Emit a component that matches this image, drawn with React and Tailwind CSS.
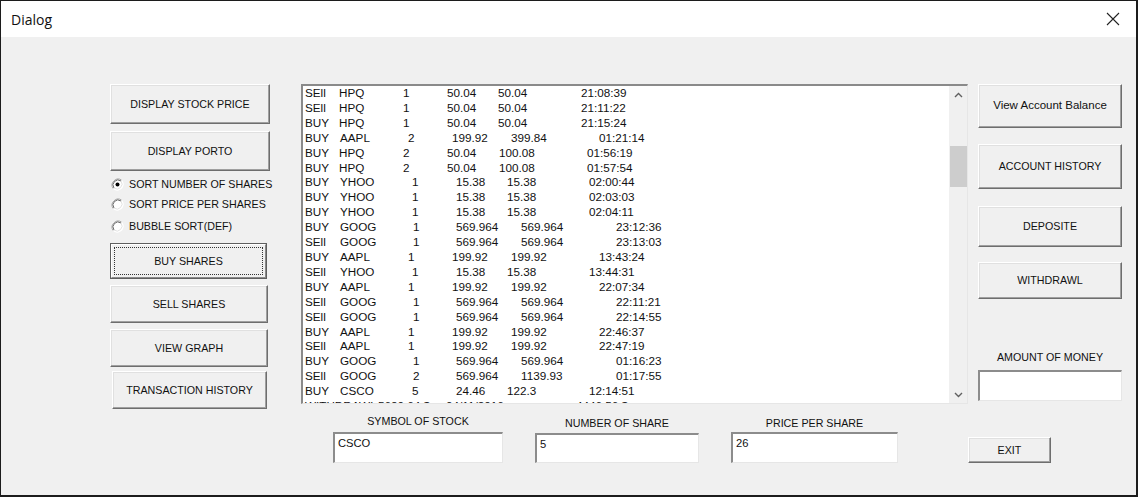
import React from "react";

const P = {
  A: [306, 340, 404, 448, 499, 582],
  B: [306, 341, 409, 453, 512, 600],
  C: [306, 340, 404, 448, 500, 588],
  D: [306, 341, 413, 457, 508, 590],
  E: [306, 341, 414, 457, 522, 617],
  W: [306, 379, 447, 577],
};

const ROWS = [
  ["A", "SEll", "HPQ", "1", "50.04", "50.04", "21:08:39"],
  ["A", "SEll", "HPQ", "1", "50.04", "50.04", "21:11:22"],
  ["A", "BUY", "HPQ", "1", "50.04", "50.04", "21:15:24"],
  ["B", "BUY", "AAPL", "2", "199.92", "399.84", "01:21:14"],
  ["C", "BUY", "HPQ", "2", "50.04", "100.08", "01:56:19"],
  ["C", "BUY", "HPQ", "2", "50.04", "100.08", "01:57:54"],
  ["D", "BUY", "YHOO", "1", "15.38", "15.38", "02:00:44"],
  ["D", "BUY", "YHOO", "1", "15.38", "15.38", "02:03:03"],
  ["D", "BUY", "YHOO", "1", "15.38", "15.38", "02:04:11"],
  ["E", "BUY", "GOOG", "1", "569.964", "569.964", "23:12:36"],
  ["E", "SEll", "GOOG", "1", "569.964", "569.964", "23:13:03"],
  ["B", "BUY", "AAPL", "1", "199.92", "199.92", "13:43:24"],
  ["D", "SEll", "YHOO", "1", "15.38", "15.38", "13:44:31"],
  ["B", "BUY", "AAPL", "1", "199.92", "199.92", "22:07:34"],
  ["E", "SEll", "GOOG", "1", "569.964", "569.964", "22:11:21"],
  ["E", "SEll", "GOOG", "1", "569.964", "569.964", "22:14:55"],
  ["B", "BUY", "AAPL", "1", "199.92", "199.92", "22:46:37"],
  ["B", "SEll", "AAPL", "1", "199.92", "199.92", "22:47:19"],
  ["E", "BUY", "GOOG", "1", "569.964", "569.964", "01:16:23"],
  ["E", "SEll", "GOOG", "2", "569.964", "1139.93", "01:17:55"],
  ["D", "BUY", "CSCO", "5", "24.46", "122.3", "12:14:51"],
  ["W", "WITHDRAWL", "5620.64 $", "04/11/2016", "4446.56 $"],
];

function Btn({ className = "", children, focus = false }) {
  if (focus) {
    return (
      <div className={"border border-[#5e5e5e] bg-[#f0f0f0] " + className}>
        <div className="h-full w-full border border-t-[#ffffff] border-l-[#ffffff] border-r-[#8a8a8a] border-b-[#8a8a8a] p-[2px]">
          <div className="flex h-full w-full items-center justify-center border border-dotted border-[#333]">
            {children}
          </div>
        </div>
      </div>
    );
  }
  return (
    <div
      className={
        "flex items-center justify-center whitespace-nowrap bg-[#f0f0f0] border border-t-[#ffffff] border-l-[#ffffff] border-r-[#6e6e6e] border-b-[#6e6e6e] shadow-[inset_-1px_-1px_0_#a0a0a0,inset_1px_1px_0_#e0e0e0] " +
        className
      }
    >
      {children}
    </div>
  );
}

function Radio({ checked, label }) {
  return (
    <div className="flex h-[20px] items-center whitespace-nowrap">
      <svg width="13" height="13" viewBox="0 0 13 13" className="ml-[1px] shrink-0">
        <circle cx="6.5" cy="6.5" r="6" fill="#ffffff" />
        <path d="M2.3 10.7 A6 6 0 0 1 10.7 2.3" fill="none" stroke="#a0a0a0" strokeWidth="1" />
        <path d="M3 10 A5 5 0 0 1 10 3" fill="none" stroke="#696969" strokeWidth="1" />
        <path d="M10.7 2.3 A6 6 0 0 1 2.3 10.7" fill="none" stroke="#ffffff" strokeWidth="1" />
        <path d="M10 3 A5 5 0 0 1 3 10" fill="none" stroke="#e3e3e3" strokeWidth="1" />
        {checked && <circle cx="6.5" cy="6.5" r="2" fill="#000" />}
      </svg>
      <span className="ml-[5px] text-[10.7px] leading-none text-[#111]">{label}</span>
    </div>
  );
}

function Field({ className = "", value = "" }) {
  return (
    <div
      className={
        "bg-white border-t-2 border-l-2 border-r border-b border-t-[#8c8c8c] border-l-[#8c8c8c] border-r-[#e6e6e6] border-b-[#e6e6e6] pl-[3px] pt-[3px] text-[11.2px] leading-[13px] text-[#111] " +
        className
      }
    >
      {value}
    </div>
  );
}

export default function App() {
  return (
    <div className="w-[1138px] h-[497px] overflow-hidden border-t border-l border-r-2 border-b-2 border-[#1c1c1c] bg-[#f0f0f0] font-['Liberation_Sans',Arial,sans-serif] text-[#111]">
      <div className="flex h-[36px] items-center justify-between bg-white pl-[10px] pr-[16px]">
        <span className="font-['Open_Sans',sans-serif] text-[14px] text-[#111]">Dialog</span>
        <svg width="14" height="14" viewBox="0 0 14 14">
          <path d="M1 1 L13 13 M13 1 L1 13" stroke="#222" strokeWidth="1.1" />
        </svg>
      </div>
      <div className="flex">
        {/* left column */}
        <div className="ml-[109px] flex w-[160px] flex-col pt-[47px] text-[10.7px]">
          <Btn className="h-[40px] w-[160px]">DISPLAY STOCK PRICE</Btn>
          <Btn className="mt-[7px] h-[40px] w-[160px]">DISPLAY PORTO</Btn>
          <div className="mt-[3px]">
            <Radio checked label="SORT NUMBER OF SHARES" />
            <Radio label="SORT PRICE PER SHARES" />
            <div className="mt-[2px]">
              <Radio label="BUBBLE SORT(DEF)" />
            </div>
          </div>
          <Btn focus className="mt-[7px] h-[36px] w-[157px]">BUY SHARES</Btn>
          <Btn className="mt-[6px] h-[38px] w-[158px]">SELL SHARES</Btn>
          <Btn className="mt-[6px] h-[38px] w-[158px]">VIEW GRAPH</Btn>
          <Btn className="ml-[2px] mt-[4px] h-[38px] w-[155px]">TRANSACTION HISTORY</Btn>
        </div>

        {/* middle column */}
        <div className="ml-[31px] flex w-[667px] flex-col pt-[47px]">
          <div className="flex h-[320px] w-[667px] border-t-2 border-l-2 border-r border-b border-t-[#8a8a8a] border-l-[#8a8a8a] border-r-[#e6e6e6] border-b-[#e6e6e6] bg-white">
            <div className="flex-1 overflow-hidden pl-[2px] text-[11.7px] leading-[14.9px] text-[#111]">
              {ROWS.map((r, idx) => {
                const pos = P[r[0]];
                const cells = r.slice(1);
                return (
                  <div key={idx} className="flex whitespace-nowrap">
                    {cells.map((c, i) => (
                      <span
                        key={i}
                        className="shrink-0"
                        style={i < cells.length - 1 ? { width: pos[i + 1] - pos[i] } : undefined}
                      >
                        {c}
                      </span>
                    ))}
                  </div>
                );
              })}
            </div>
            <div className="flex w-[18px] flex-col items-center bg-[#f0f0f0]">
              <div className="flex h-[17px] w-full items-center justify-center">
                <svg width="9" height="6" viewBox="0 0 9 6">
                  <path d="M1 5 L4.5 1.5 L8 5" fill="none" stroke="#606060" strokeWidth="1.4" />
                </svg>
              </div>
              <div className="mt-[43px] h-[41px] w-[17px] bg-[#cdcdcd]" />
              <div className="flex-1" />
              <div className="flex h-[17px] w-full items-center justify-center">
                <svg width="9" height="6" viewBox="0 0 9 6">
                  <path d="M1 1 L4.5 4.5 L8 1" fill="none" stroke="#606060" strokeWidth="1.4" />
                </svg>
              </div>
            </div>
          </div>

          <div className="ml-[32px] mt-[11px] flex text-[10.7px]">
            <div className="flex w-[170px] flex-col items-center">
              <span className="h-[13px] leading-[12px]">SYMBOL OF STOCK</span>
              <Field className="mt-[4px] h-[31px] w-[170px]" value="CSCO" />
            </div>
            <div className="ml-[32px] flex w-[164px] flex-col items-center">
              <span className="mt-[2px] h-[13px] leading-[12px]">NUMBER OF SHARE</span>
              <Field className="mt-[3px] h-[30px] w-[164px]" value="5" />
            </div>
            <div className="ml-[32px] flex w-[167px] flex-col items-center">
              <span className="mt-[2px] h-[13px] leading-[12px]">PRICE PER SHARE</span>
              <Field className="mt-[2px] h-[31px] w-[167px]" value="26" />
            </div>
          </div>
        </div>

        {/* right column */}
        <div className="ml-[10px] flex w-[144px] flex-col pt-[47px] text-[10.7px]">
          <Btn className="h-[44px] w-[144px] text-[11.5px]">View Account Balance</Btn>
          <Btn className="mt-[16px] h-[45px] w-[144px]">ACCOUNT HISTORY</Btn>
          <Btn className="mt-[17px] h-[41px] w-[144px]">DEPOSITE</Btn>
          <Btn className="mt-[15px] h-[37px] w-[144px]">WITHDRAWL</Btn>
          <div className="mt-[52px] flex h-[12px] items-center justify-center whitespace-nowrap leading-none">AMOUNT OF MONEY</div>
          <Field className="mt-[7px] h-[31px] w-[144px]" />
          <Btn className="-ml-[10px] mt-[36px] h-[26px] w-[83px]">EXIT</Btn>
        </div>
      </div>
    </div>
  );
}
